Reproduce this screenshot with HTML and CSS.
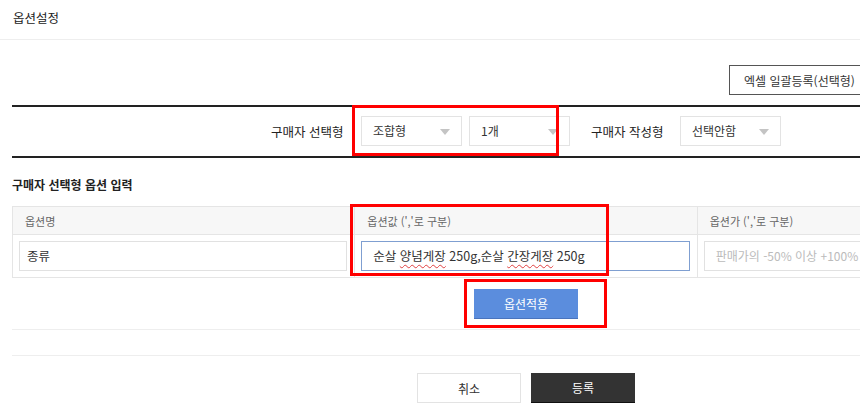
FILE: index.html
```html
<!DOCTYPE html>
<html lang="ko">
<head>
<meta charset="utf-8">
<title>옵션설정</title>
<link rel="stylesheet" href="styles.css">
</head>
<body>
<div class="page">
  <div class="header"><h1 class="title">옵션설정</h1></div>
  <div class="content">
    <div class="toolbar">
      <button class="btn-excel">엑셀 일괄등록(선택형)</button>
    </div>
    <div class="filter">
      <span class="label">구매자 선택형</span>
      <div class="select s1"><span>조합형</span><i class="arrow"></i></div>
      <div class="select s2"><span>1개</span><i class="arrow"></i></div>
      <span class="label l2">구매자 작성형</span>
      <div class="select s3"><span>선택안함</span><i class="arrow"></i></div>
    </div>
    <h2 class="section-title">구매자 선택형 옵션 입력</h2>
    <table class="opt-table">
      <thead>
        <tr><th>옵션명</th><th>옵션값 (','로 구분)</th><th>옵션가 (','로 구분)</th></tr>
      </thead>
      <tbody>
        <tr>
          <td><div class="field">종류</div></td>
          <td><div class="field focus">순살 <span class="spell">양념게장</span> 250g,순살 <span class="spell">간장게장</span> 250g</div></td>
          <td><div class="field ph">판매가의 -50% 이상 +100%</div></td>
        </tr>
      </tbody>
    </table>
    <div class="apply"><button class="btn-apply">옵션적용</button></div>
    <div class="spacer"></div>
    <div class="actions">
      <button class="btn-cancel">취소</button>
      <button class="btn-submit">등록</button>
    </div>
  </div>
  <div class="mark m1"></div>
  <div class="mark m2"></div>
  <div class="mark m3"></div>
</div>
</body>
</html>
```
FILE: styles.css
```css
* { box-sizing: border-box; }
html, body { margin: 0; padding: 0; background: #fff; overflow: hidden; }
body {
  font-family: "Noto Sans CJK KR", "Noto Sans", sans-serif;
  color: #333;
  width: 860px;
  height: 416px;
}
.page { position: relative; width: 1052px; }
.header { height: 40px; border-bottom: 1px solid #eee; }
.title {
  margin: 0;
  padding: 10px 0 0 13px;
  font-size: 12.5px;
  font-weight: normal;
  line-height: 16px;
  color: #222;
}
.content { padding: 0 12px; }
.toolbar { height: 65px; padding-top: 25px; }
.btn-excel {
  display: block;
  margin-left: 717px;
  width: 140px;
  height: 30px;
  border: 1px solid #555;
  background: #fff;
  font-family: inherit;
  font-size: 12px;
  color: #333;
  padding: 0 0 0 14px;
  text-align: left;
  white-space: nowrap;
}
.filter {
  display: flex;
  align-items: center;
  height: 53px;
  border-top: 2px solid #222;
  border-bottom: 2px solid #222;
  padding-left: 259px;
  padding-bottom: 1px;
}
.label { font-size: 12.5px; color: #222; white-space: nowrap; width: 78px; }
.l2 { margin-left: 21px; }
.select {
  position: relative;
  width: 101px;
  height: 30px;
  border: 1px solid #e3e3e3;
  font-size: 12px;
  line-height: 28px;
  padding-left: 11px;
  color: #333;
  background: #fff;
}
.s1 { margin-left: 12px; }
.s2 { margin-left: 7px; }
.s3 { margin-left: 11px; }
.arrow {
  position: absolute;
  right: 11px;
  top: 12px;
  width: 0; height: 0;
  border-left: 5px solid transparent;
  border-right: 5px solid transparent;
  border-top: 6px solid #c4c4c4;
}
.section-title {
  margin: 0;
  padding-top: 19px;
  height: 48px;
  font-size: 12px;
  font-weight: bold;
  line-height: 16px;
  color: #222;
}
.opt-table {
  width: 1028px;
  border-collapse: collapse;
  table-layout: fixed;
}
.opt-table th, .opt-table td { border: 1px solid #e5e5e5; }
.opt-table th {
  background: #f7f7f7;
  height: 28px;
  font-size: 11px;
  font-weight: normal;
  color: #666;
  text-align: left;
  padding: 0 0 0 12px;
}
.opt-table td { height: 43px; padding: 0 7px 0 6px; }
.field {
  height: 30px;
  border: 1px solid #e1e1e1;
  font-size: 12.5px;
  line-height: 28px;
  padding-left: 7px;
  color: #333;
  white-space: nowrap;
  overflow: hidden;
}
.field.focus { border-color: #7f9fd1; padding-left: 11px; }
.field.ph { color: #bbb; padding-left: 11px; font-size: 12px; }
.spell {
  text-decoration: underline wavy #e04040;
  text-decoration-thickness: 1px;
  text-underline-offset: 3px;
}
.apply {
  display: flex;
  justify-content: center;
  padding-top: 11px;
  height: 52px;
  border-bottom: 1px solid #eee;
}
.btn-apply {
  width: 104px;
  height: 30px;
  border: 0;
  border-bottom: 1px solid #4a74bd;
  background: #5b8ddd;
  color: #fff;
  font-family: inherit;
  font-size: 12px;
  padding: 0;
}
.spacer { height: 26px; border-bottom: 1px solid #eee; }
.actions {
  display: flex;
  justify-content: center;
  gap: 10px;
  padding-top: 17px;
}
.btn-cancel, .btn-submit {
  width: 104px;
  height: 30px;
  font-family: inherit;
  font-size: 12px;
  padding: 0;
}
.btn-cancel { border: 1px solid #e3e3e3; background: #fff; color: #333; }
.btn-submit { border: 0; border-bottom: 1px solid #111; background: #333; color: #fff; }
.mark { position: absolute; border: 3px solid #f00; }
.m1 { left: 352px; top: 105px; width: 207px; height: 51px; }
.m2 { left: 350px; top: 204px; width: 259px; height: 72px; }
.m3 { left: 464px; top: 279px; width: 143px; height: 49px; }
```
